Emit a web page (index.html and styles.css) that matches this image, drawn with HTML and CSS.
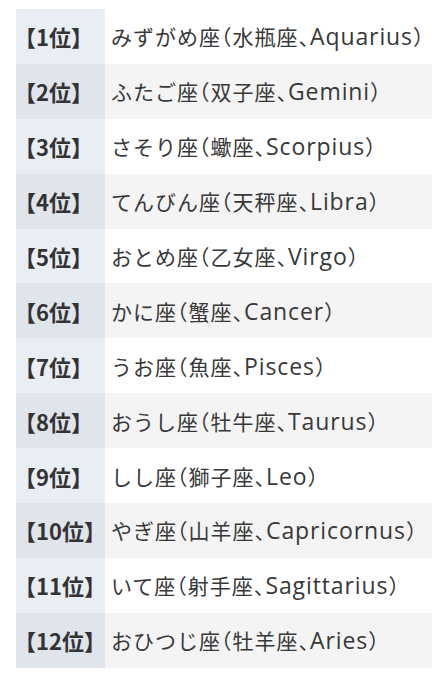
FILE: index.html
```html
<!DOCTYPE html>
<html lang="ja">
<head>
<meta charset="utf-8">
<link rel="stylesheet" href="styles.css">
</head>
<body>
<table class="rank-table">
  <tbody>
    <tr><th>【1位】</th><td>みずがめ座（水瓶座、<span class="en" lang="en">Aquarius</span>）</td></tr>
    <tr><th>【2位】</th><td>ふたご座（双子座、<span class="en" lang="en">Gemini</span>）</td></tr>
    <tr><th>【3位】</th><td>さそり座（蠍座、<span class="en" lang="en">Scorpius</span>）</td></tr>
    <tr><th>【4位】</th><td>てんびん座（天秤座、<span class="en" lang="en">Libra</span>）</td></tr>
    <tr><th>【5位】</th><td>おとめ座（乙女座、<span class="en" lang="en">Virgo</span>）</td></tr>
    <tr><th>【6位】</th><td>かに座（蟹座、<span class="en" lang="en">Cancer</span>）</td></tr>
    <tr><th>【7位】</th><td>うお座（魚座、<span class="en" lang="en">Pisces</span>）</td></tr>
    <tr><th>【8位】</th><td>おうし座（牡牛座、<span class="en" lang="en">Taurus</span>）</td></tr>
    <tr><th>【9位】</th><td>しし座（獅子座、<span class="en" lang="en">Leo</span>）</td></tr>
    <tr><th>【10位】</th><td>やぎ座（山羊座、<span class="en" lang="en">Capricornus</span>）</td></tr>
    <tr><th>【11位】</th><td>いて座（射手座、<span class="en" lang="en">Sagittarius</span>）</td></tr>
    <tr><th>【12位】</th><td>おひつじ座（牡羊座、<span class="en" lang="en">Aries</span>）</td></tr>
  </tbody>
</table>
</body>
</html>
```

FILE: styles.css
```css
html, body {
  margin: 0;
  padding: 0;
  background: #ffffff;
}

body {
  padding: 9px 15px 0 16px;
  font-family: "Noto Sans CJK JP", "Noto Sans", sans-serif;
  color: #333333;
}

.rank-table {
  width: 416px;
  border-collapse: collapse;
  border-spacing: 0;
  table-layout: fixed;
}

.rank-table tr {
  height: 54.9px;
}

.rank-table th {
  width: 89px;
  padding: 0 0 0 9px;
  box-sizing: border-box;
  text-align: left;
  font-weight: 700;
  font-size: 22px;
  white-space: nowrap;
  font-feature-settings: "halt";
  letter-spacing: 0;
  background: #e9edf4;
  color: #333333;
}

.rank-table td {
  padding: 0 0 0 6px;
  font-size: 21px;
  font-weight: 400;
  white-space: nowrap;
  font-feature-settings: "halt";
  letter-spacing: 1px;
  background: #ffffff;
  color: #383838;
}

.rank-table .en {
  font-family: "Open Sans", "Noto Sans", sans-serif;
  font-size: 23px;
  letter-spacing: 0.9px;
}

.rank-table tr:nth-child(even) th {
  background: #e0e4eb;
}

.rank-table tr:nth-child(even) td {
  background: #f4f4f4;
}
```
